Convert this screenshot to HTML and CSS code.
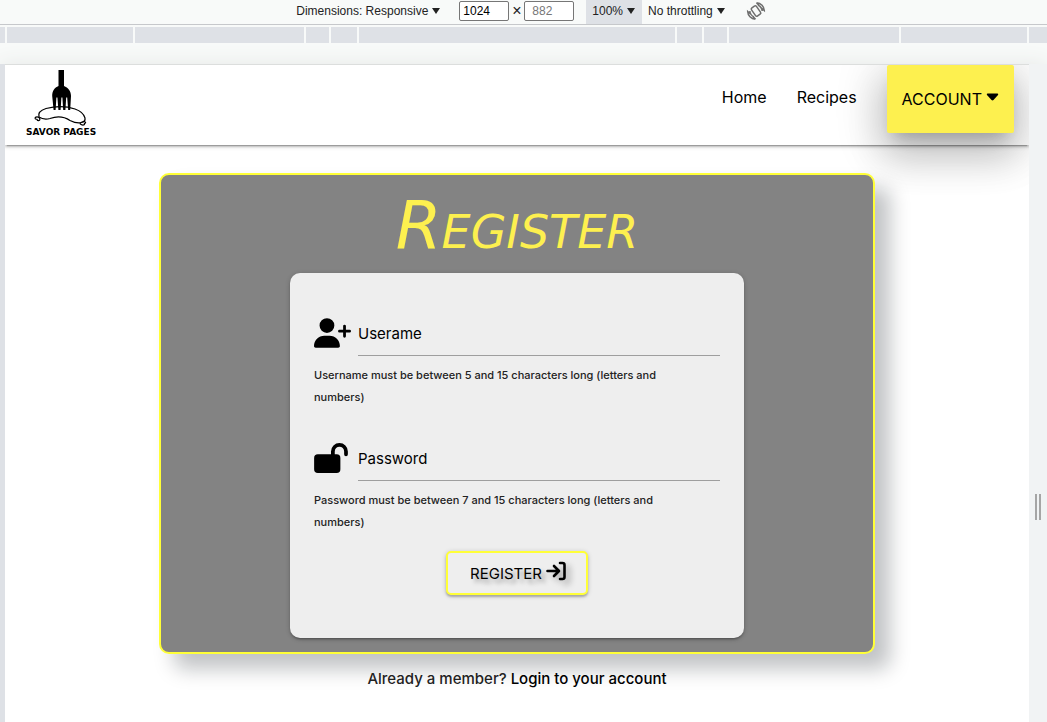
FILE: index.html
```html
<!DOCTYPE html>
<html lang="en">
<head>
<meta charset="utf-8">
<title>Savor Pages - Register</title>
<link rel="stylesheet" href="styles.css">
</head>
<body>
<div class="toolbar">
  <button class="tool device" type="button">Dimensions: Responsive <span class="arrow"></span></button>
  <input class="size" type="text" value="1024" aria-label="Width">
  <span class="times">×</span>
  <input class="size size-muted" type="text" value="882" aria-label="Height">
  <button class="tool zoom" type="button">100% <span class="arrow"></span></button>
  <button class="tool throttle" type="button">No throttling <span class="arrow"></span></button>
  <button class="tool rotate" type="button" aria-label="Rotate">
    <svg width="20" height="20" viewBox="0 0 20 20" fill="none" stroke="#6e6e6e" stroke-width="1.5"><rect x="7" y="5" width="6" height="10" rx="1.500" transform="rotate(-35 10 10)"/><path d="M9.500 18.300C5 18 1.800 14.500 1.700 10.500L4.500 13M9.500 18.300 7 15.500M3.800 10c.3 3 1.700 4.700 4.200 6M10.500 1.700C15 2 18.200 5.500 18.300 9.500L15.500 7M10.500 1.700 13 4.500M16.200 10c-.3-3-1.700-4.700-4.200-6"/></svg>
  </button>
</div>
<div class="ruler">
  <i class="s5"></i><i class="s126"></i><i class="s169"></i><i class="s23"></i><i class="s26"></i><i class="s316"></i><i class="s25"></i><i class="s23"></i><i class="s170"></i><i class="s126"></i><i class="s18"></i>
</div>
<div class="stage">
  <div class="edge"></div>
  <div class="page">
    <header class="nav">
      <a class="logo" href="#">
        <svg width="54" height="56" viewBox="0 0 54 56" aria-hidden="true">
          <path d="M24.500 0H30v16c4 1.500 7 5 7 10l-.8 14h-2l-1-12.500h-1L31.400 40h-2.200l-.8-12.500h-1L26.600 40h-2.200l-1-12.500h-1L21.600 40h-2l-1.400-14c0-5 2.300-8.500 6.300-10z"/>
          <path d="M5 47C3.500 42 7 40 12 38.500 22 36 32 36 41 39c6 2 9 5.500 10 9 .3 2-.5 3.500-2 4-4 2-9 .5-13-1.500-6-4-13-4.500-20-2-4 1-8 .5-11-1.500z" fill="none" stroke="#000" stroke-width="1.200"/>
          <path d="M5 47.500c-2-1.200-5-.3-3.500 1.500 1 0 2 .3 2 1.500 2 .5 3.500-1 1.500-3zM49.500 51.500c-3 .5-4.500 2.500-2.500 3 2 1 4 .5 3.500-1 2-.5 1-2-1-2z" fill="none" stroke="#000" stroke-width="1.200"/>
        </svg>
        <span class="brand">SAVOR PAGES</span>
      </a>
      <nav class="links">
        <a href="#">Home</a>
        <a href="#">Recipes</a>
        <button class="account" type="button">ACCOUNT
          <svg width="13" height="8" viewBox="0 0 13 8" aria-hidden="true"><path d="M1.500.5h10q1.200.3.5 1.500l-4.500 5q-1 .8-2 0L1 2Q.3.800 1.500.5z"/></svg>
        </button>
      </nav>
    </header>
    <main class="content">
      <section class="card">
        <h1>Register</h1>
        <form class="panel">
          <div class="field">
            <svg class="icon" width="37" height="30" viewBox="0 0 640 512" aria-hidden="true"><path d="M224 256A128 128 0 1 0 224 0a128 128 0 1 0 0 256zm-45.700 48C79.800 304 0 383.800 0 482.300 0 498.700 13.300 512 29.700 512h388.600c16.400 0 29.700-13.300 29.700-29.700C448 383.800 368.200 304 269.700 304zM504 312v-64h-64a24 24 0 0 1 0-48h64v-64a24 24 0 0 1 48 0v64h64a24 24 0 0 1 0 48h-64v64a24 24 0 0 1-48 0z"/></svg>
            <div class="entry"><input id="username" type="text"><label for="username">Userame</label></div>
            <p class="help">Username must be between 5 and 15 characters long (letters and numbers)</p>
          </div>
          <div class="field">
            <svg class="icon" width="34" height="30" viewBox="0 0 576 512" aria-hidden="true"><path d="M352 144a80 80 0 0 1 160 0v48a32 32 0 0 0 64 0v-48a144 144 0 0 0-288 0v48H64a64 64 0 0 0-64 64v192a64 64 0 0 0 64 64h320a64 64 0 0 0 64-64V256a64 64 0 0 0-64-64h-32z"/></svg>
            <div class="entry"><input id="password" type="password"><label for="password">Password</label></div>
            <p class="help">Password must be between 7 and 15 characters long (letters and numbers)</p>
          </div>
          <button class="submit" type="submit">REGISTER
            <svg width="20" height="20" viewBox="0 0 20 20" fill="none" stroke="#000" stroke-width="2.600" stroke-linecap="round" stroke-linejoin="round" aria-hidden="true"><path d="M1.500 10H12M8 5l5 5-5 5M14 2h2.500q2 0 2 2v12q0 2-2 2H14"/></svg>
          </button>
        </form>
      </section>
      <p class="member">Already a member? <a href="#">Login to your account</a></p>
    </main>
  </div>
  <div class="gutter"><span class="grip"></span></div>
</div>
</body>
</html>
```
FILE: styles.css
```css
* { box-sizing: border-box; }
body {
  margin: 0;
  min-height: 100vh;
  display: flex;
  flex-direction: column;
  background: #f8faf9;
  color: #222;
  font-family: Inter, "Open Sans", sans-serif;
  font-size: 15px;
}
a { color: #000; text-decoration: none; }
button { font: inherit; color: #000; border: 0; background: none; padding: 0; }

.toolbar {
  display: flex;
  justify-content: center;
  align-items: center;
  height: 25px;
  padding: 0 0 3px 15px;
  border-bottom: 1px solid #c6c8cb;
  font-family: "Liberation Sans", Arial, sans-serif;
  font-size: 12px;
}
.tool { display: flex; align-items: center; gap: 4px; color: #222; white-space: nowrap; }
.arrow { border: 4px solid transparent; border-top: 6px solid #222; border-bottom: 0; }
.device { margin-right: 19px; }
.size {
  width: 50px;
  height: 20px;
  padding: 0 3px;
  border: 1px solid #767676;
  border-radius: 2px;
  background: #fff;
  font: inherit;
  color: #000;
}
.size-muted { padding-left: 7px; color: #777; }
.times { width: 15px; text-align: center; font-size: 16px; }
.zoom { align-self: flex-start; height: 24px; margin: 0 6px 0 12px; padding: 0 7px 2px 6px; background: #dee1e6; }
.rotate { margin-left: 21px; }

.ruler { display: flex; gap: 2px; height: 16px; margin-top: 2px; }
.ruler i { background: #dee1e6; min-width: 0; }
.s5 { flex: 5; }
.s18 { flex: 18; }
.s23 { flex: 23; }
.s25 { flex: 25; }
.s26 { flex: 26; }
.s126 { flex: 126; }
.s169 { flex: 169; }
.s170 { flex: 170; }
.s316 { flex: 316; }

.stage { flex: 1; display: flex; margin-top: 21px; box-shadow: 0 0 20px #e6e8e7; }
.edge { width: 5px; background: #dee1e6; }
.page { flex: 1; min-width: 0; overflow: hidden; background: #fff; border-top: 1px solid #dcdedd; }
.gutter { width: 18px; display: flex; flex-direction: column; align-items: center; background: #f1f3f4; padding-top: 430px; }
.grip { width: 6px; height: 26px; border: solid #a5a5a5; border-width: 0 2px; }

.nav {
  display: flex;
  justify-content: space-between;
  height: 80px;
  padding: 0 15px 0 21px;
  box-shadow: 0 2px 2px rgba(0,0,0,.14), 0 3px 1px -2px rgba(0,0,0,.2), 0 1px 5px rgba(0,0,0,.2);
}
.logo { display: flex; flex-direction: column; align-items: center; padding-top: 5px; }
.brand { font: bold 9px/12px "DejaVu Sans", sans-serif; }
.links { display: flex; align-items: flex-start; gap: 30px; line-height: 64px; font-size: 16px; }
.account {
  height: 68px;
  padding: 0 15px;
  display: flex;
  align-items: center;
  gap: 4px;
  background: #fdf04f;
  border-radius: 2px;
  box-shadow: 0 24px 38px 3px rgba(0,0,0,.14), 0 9px 46px 8px rgba(0,0,0,.16), 0 11px 15px -7px rgba(0,0,0,.2);
}
.account svg { margin-bottom: 5px; }

.content { padding-top: 28px; }
.card {
  position: relative;
  width: 70%;
  margin: 0 auto;
  padding: 18px 0 14px;
  background: #838383;
  border: 2px solid #ffff37;
  border-radius: 10px;
  box-shadow: 15px 15px 20px rgba(9,15,25,.25);
}
h1 {
  margin: 0 0 14px;
  text-align: center;
  font: oblique small-caps 66px/66px "DejaVu Sans", sans-serif;
  color: #fdf04f;
}
.panel {
  width: 454px;
  max-width: 92%;
  margin: 0 auto;
  padding: 35px 24px 43px;
  display: flex;
  flex-direction: column;
  background: #eee;
  border-radius: 10px;
  box-shadow: 0 2px 2px rgba(0,0,0,.14), 0 3px 1px -2px rgba(0,0,0,.12), 0 1px 5px rgba(0,0,0,.2);
}
.field { display: grid; grid-template-columns: 44px 1fr; margin-bottom: 25px; }
.icon { margin-top: 10px; }
.entry { position: relative; height: 48px; }
.entry input {
  width: 100%;
  height: 100%;
  border: 0;
  border-bottom: 1px solid #9e9e9e;
  background: none;
  font: inherit;
}
.entry label { position: absolute; left: 0; top: 14px; line-height: 24px; color: #000; }
.help { grid-column: 1 / -1; margin: 8px 0 0; padding-right: 40px; font-size: 11px; line-height: 22px; font-weight: 500; }
.submit {
  align-self: center;
  display: flex;
  align-items: center;
  gap: 4px;
  height: 44px;
  margin-top: -7px;
  padding: 0 20px 0 22px;
  border: 2px solid #ffff37;
  border-radius: 5px;
  font-size: 15px;
  text-shadow: 4px 4px 4px rgba(0,0,0,.35);
  box-shadow: 0 2px 2px rgba(0,0,0,.2), 0 1px 5px rgba(0,0,0,.2);
  background: #eee;
}
.submit svg { margin-bottom: 4px; filter: drop-shadow(4px 4px 3px rgba(0,0,0,.35)); }
.member { position: relative; margin: 14px 0; text-align: center; line-height: 22px; font-weight: 500; }
```
